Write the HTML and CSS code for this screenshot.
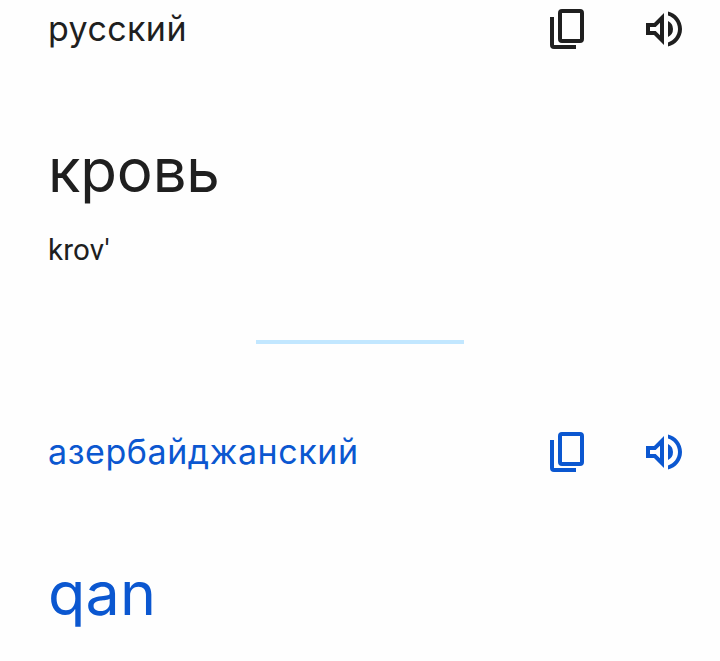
FILE: index.html
```html
<!DOCTYPE html>
<html lang="ru">
<head>
<meta charset="utf-8">
<title>кровь</title>
<link rel="stylesheet" href="styles.css">
</head>
<body>
<svg class="defs" aria-hidden="true">
  <symbol id="copy" viewBox="0 0 48 48">
    <rect x="16" y="6" width="22" height="30" rx="2" fill="none" stroke="currentColor" stroke-width="4"/>
    <path d="M8 12V40Q8 42 10 42H32" fill="none" stroke="currentColor" stroke-width="4"/>
  </symbol>
  <symbol id="volume" viewBox="0 0 24 24">
    <path fill="currentColor" d="M3 9v6h4l5 5V4L7 9H3zm7-.17v6.34L7.83 13H5v-2h2.83L10 8.83zM16.5 12A4.5 4.5 0 0 0 14 7.97v8.05A4.47 4.47 0 0 0 16.5 12zM14 3.23v2.06c2.89.86 5 3.54 5 6.71s-2.11 5.85-5 6.71v2.06c4.01-.91 7-4.49 7-8.77s-2.99-7.86-7-8.77z"/>
  </symbol>
</svg>
<main class="translation">
  <section class="source">
    <header class="bar">
      <span class="language">русский</span>
      <svg class="icon"><use href="#copy"/></svg>
      <svg class="icon"><use href="#volume"/></svg>
    </header>
    <div class="phrase"><span class="word-ru">кровь</span></div>
    <div class="translit"><span>krov'</span></div>
  </section>
  <hr class="divider">
  <section class="target">
    <header class="bar">
      <span class="language language-long">азербайджанский</span>
      <svg class="icon"><use href="#copy"/></svg>
      <svg class="icon"><use href="#volume"/></svg>
    </header>
    <div class="phrase"><span class="word-az">qan</span></div>
  </section>
</main>
</body>
</html>
```
FILE: styles.css
```css
body {
  margin: 0;
  background: #fefefe;
  color: #1f1f1f;
  font-family: Inter, "Open Sans", sans-serif;
}
.defs { display: none; }
.translation {
  height: 661px;
  overflow: hidden;
}
.source { padding-top: 5px; }
.bar {
  display: flex;
  align-items: center;
  gap: 48px;
  height: 48px;
  padding: 0 32px 0 48px;
}
.language {
  flex: 1;
  font-size: 34px;
  line-height: 48px;
  letter-spacing: 0.4px;
  white-space: nowrap;
}
.language-long { letter-spacing: 0.57px; }
.icon {
  flex: none;
  width: 48px;
  height: 48px;
}
.phrase {
  height: 80px;
  margin-top: 77px;
  padding-left: 48px;
  font-size: 60px;
  line-height: 80px;
}
.word-ru { letter-spacing: -0.2px; }
.word-az {
  font-size: 61px;
  letter-spacing: 0.2px;
}
.translit {
  height: 40px;
  margin-top: 20px;
  padding-left: 48px;
  font-family: Roboto, sans-serif;
  font-size: 29.5px;
  line-height: 40px;
  letter-spacing: 0.2px;
}
.divider {
  width: 208px;
  height: 4px;
  margin: 70px auto 84px;
  border: 0;
  background: #c2e7ff;
}
.target { color: #0b57d0; }
```
